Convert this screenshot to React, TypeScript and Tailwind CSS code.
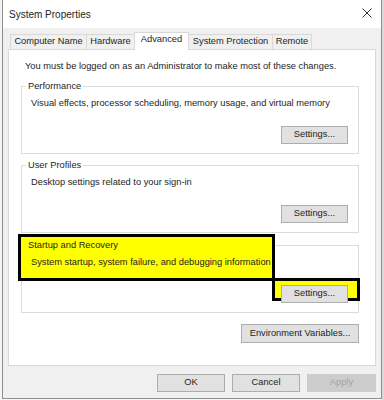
import React from "react";

const font = { fontFamily: '"Liberation Sans", Arial, sans-serif' };

function Btn({ children, w, disabled }: { children: React.ReactNode; w: string; disabled?: boolean }) {
  return (
    <div
      className={`${w} h-[18px] flex items-center justify-center border text-[9.3px] leading-none ${
        disabled ? "bg-[#cccccc] border-[#cccccc] text-[#a3a3a3]" : "bg-[#e1e1e1] border-[#adadad] text-[#1e1e1e]"
      }`}
    >
      {children}
    </div>
  );
}

function Group({
  label,
  text,
  highlight,
}: {
  label: string;
  text: string;
  highlight?: boolean;
}) {
  return (
    <div className="relative ml-[12px] w-[338px] h-[68px] border border-[#dcdcdc] flex flex-col pt-[10px] pb-[9px] justify-between">
      {highlight && (
        <div className="absolute left-[-4px] top-[-12px] w-[257px] h-[47px] bg-[#ffff00] border-[3px] border-black z-[1]" />
      )}
      <span
        className={`absolute left-[4px] top-[-7px] px-[2px] text-[9.3px] leading-[12px] text-[#1e1e1e] z-[2] ${
          highlight ? "" : "bg-white"
        }`}
      >
        {label}
      </span>
      <span className="relative z-[2] ml-[9px] text-[9.3px] leading-[12px] text-[#1e1e1e]">{text}</span>
      <div className="relative self-end mr-[10px]">
        {highlight && (
          <div className="absolute left-[-9px] top-[-7px] w-[88px] h-[23px] bg-[#ffff00] border-[3px] border-black" />
        )}
        <div className="relative">
          <Btn w="w-[67px]">Settings...</Btn>
        </div>
      </div>
    </div>
  );
}

export default function App() {
  return (
    <div className="w-[384px] h-[400px] overflow-hidden flex bg-[#f6f6f6]" style={font}>
      <div className="w-[2px] h-full bg-[#f4f4f4]" />
      <div className="w-[380px] h-[399px] border-x border-b border-[#8f8f8f] flex flex-col bg-[#f0f0f0]">
        <div className="h-[28px] bg-white flex items-center justify-between pl-[6px] pr-[9px]">
          <span className="text-[10px] text-[#1e1e1e]">System Properties</span>
          <svg width="10" height="10" viewBox="0 0 10 10" className="mb-[2px]">
            <path d="M0.5 0.5 L9.5 9.5 M9.5 0.5 L0.5 9.5" stroke="#333" strokeWidth="1" />
          </svg>
        </div>
        <div className="pl-[5px] pr-[5px] pt-[3px] flex flex-col">
          <div className="flex items-end pl-[2px] h-[18px] text-[9.3px] text-[#1e1e1e] leading-none relative z-[1]">
            <div className="w-[76px] h-[15px] border-l border-t border-[#d9d9d9] flex items-center justify-center">Computer Name</div>
            <div className="w-[48px] h-[15px] border-l border-t border-[#d9d9d9] flex items-center justify-center">Hardware</div>
            <div className="w-[55px] h-[18px] bg-white border-l border-t border-r border-[#d9d9d9] flex items-center justify-center pb-[3px] mb-[-1px]">Advanced</div>
            <div className="w-[83px] h-[15px] border-t border-[#d9d9d9] flex items-center justify-center">System Protection</div>
            <div className="w-[40px] h-[15px] border-l border-t border-r border-[#d9d9d9] flex items-center justify-center">Remote</div>
          </div>
          <div className="w-[368px] h-[317px] bg-white border border-[#d9d9d9] flex flex-col">
            <div className="pl-[16px] pt-[10px] h-[30px] text-[9.3px] leading-[12px] text-[#1e1e1e]">
              You must be logged on as an Administrator to make most of these changes.
            </div>
            <div className="mt-[6px]">
              <Group label="Performance" text="Visual effects, processor scheduling, memory usage, and virtual memory" />
            </div>
            <div className="mt-[11px]">
              <Group label="User Profiles" text="Desktop settings related to your sign-in" />
            </div>
            <div className="mt-[12px]">
              <Group label="Startup and Recovery" text="System startup, system failure, and debugging information" highlight />
            </div>
            <div className="mt-[11px] flex justify-end pr-[16px]">
              <div className="w-[118px] h-[19px] flex items-center justify-center bg-[#e1e1e1] border border-[#adadad] text-[9.3px] text-[#1e1e1e]">
                Environment Variables...
              </div>
            </div>
          </div>
          <div className="mt-[8px] flex justify-end gap-[7px]">
            <Btn w="w-[68px]">OK</Btn>
            <Btn w="w-[68px]">Cancel</Btn>
            <Btn w="w-[69px]" disabled>Apply</Btn>
          </div>
        </div>
      </div>
      <div className="flex-1 h-full bg-[#dadada]" />
    </div>
  );
}
